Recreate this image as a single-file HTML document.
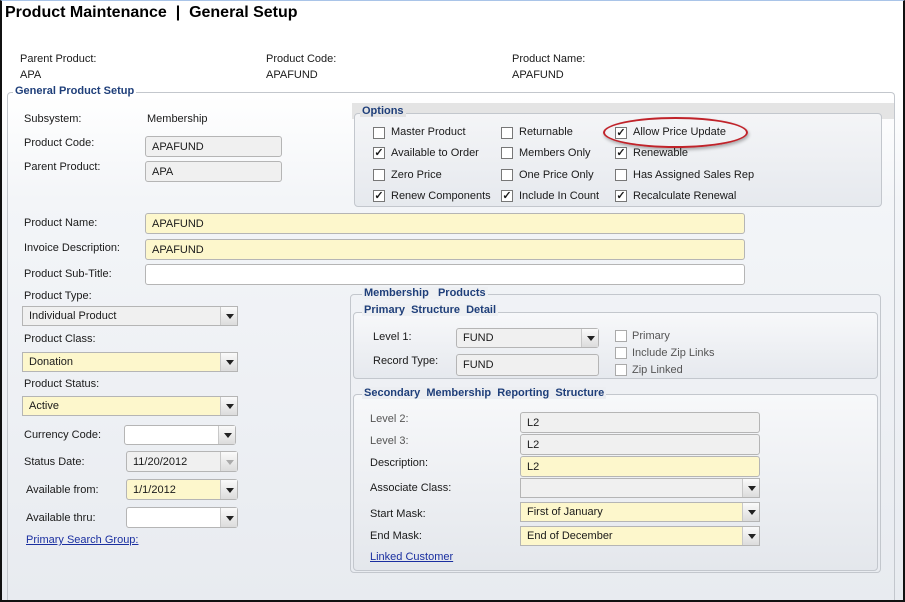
<!DOCTYPE html>
<html><head><meta charset="utf-8"><style>
*{box-sizing:border-box;margin:0;padding:0}
body{width:905px;height:602px;overflow:hidden;font-family:"Liberation Sans",Arial,sans-serif;font-size:11px;color:#1a1a1a;position:relative;background:#fff}
#frame{position:absolute;left:0;top:0;width:905px;height:602px;background:linear-gradient(#fff 0,#fff 95px,#f3f5f8 200px,#e8ebf0 602px)}
#bord{position:absolute;left:0;top:0;width:905px;height:602px;border-left:2px solid #111;border-right:2px solid #111;border-bottom:2px solid #111;border-top:1px solid #a9c4e8;z-index:10}
.a{position:absolute;white-space:nowrap}
.t{position:absolute;font-size:16px;font-weight:bold;left:5px;top:4px;color:#000}
.lg{position:absolute;font-weight:bold;color:#1f3f7a;background:transparent;padding:0 2px;white-space:nowrap}
.box{position:absolute;border:1px solid #c3c7cd;border-radius:4px}
.in{position:absolute;border:1px solid #b5b5b5;border-radius:3px;background:#f0f0f0;padding:0 0 0 6px;white-space:nowrap;display:flex;align-items:center}
.y{background:#fdf7cc}
.w{background:#fff}
.dd{position:absolute;right:0;top:0;bottom:0;width:17px;background:linear-gradient(#fafafa,#dcdcdc);border-left:1px solid #c8c8c8}
.dd:after{content:"";position:absolute;left:5px;top:50%;margin-top:-2px;border-left:4px solid transparent;border-right:4px solid transparent;border-top:5px solid #222}
.dis .dd:after{border-top-color:#aaa}
.cb{position:absolute;width:12px;height:12px;border:1px solid #777;background:#fff;font-size:11px;line-height:10px;text-align:center;font-weight:bold}
.cbd{border-color:#aaa}
.lk{position:absolute;color:#1a2fa0;text-decoration:underline;white-space:nowrap}
.g{color:#555}
</style></head><body><div id="frame">
<div class="t">Product Maintenance &nbsp;|&nbsp; General Setup</div>
<div class="a" style="left:20px;top:53px">Parent Product:</div>
<div class="a" style="left:20px;top:69px">APA</div>
<div class="a" style="left:266px;top:53px">Product Code:</div>
<div class="a" style="left:266px;top:69px">APAFUND</div>
<div class="a" style="left:512px;top:53px">Product Name:</div>
<div class="a" style="left:512px;top:69px">APAFUND</div>

<div class="box" style="left:7px;top:92px;width:888px;height:510px;border-bottom:none;border-radius:4px 4px 0 0"></div>
<div class="lg" style="left:13px;top:85px;background:#fff">General Product Setup</div>

<div class="a" style="left:24px;top:113px">Subsystem:</div>
<div class="a" style="left:147px;top:113px">Membership</div>
<div class="a" style="left:24px;top:137px">Product Code:</div>
<div class="in" style="left:145px;top:136px;width:137px;height:21px">APAFUND</div>
<div class="a" style="left:24px;top:161px">Parent Product:</div>
<div class="in" style="left:145px;top:161px;width:137px;height:21px">APA</div>

<div style="position:absolute;left:352px;top:103px;width:542px;height:16px;background:#e4e4e4"></div>
<div class="box" style="left:354px;top:113px;width:528px;height:94px;background:linear-gradient(#f4f5f7,#e6e9ee)"></div>
<div class="lg" style="left:360px;top:105px;background:#e4e4e4">Options</div>
<div class="cb" style="left:373px;top:127px"></div><div class="a" style="left:391px;top:126px">Master Product</div>
<div class="cb" style="left:373px;top:147px">✓</div><div class="a" style="left:391px;top:147px">Available to Order</div>
<div class="cb" style="left:373px;top:169px"></div><div class="a" style="left:391px;top:169px">Zero Price</div>
<div class="cb" style="left:373px;top:190px">✓</div><div class="a" style="left:391px;top:190px">Renew Components</div>
<div class="cb" style="left:501px;top:127px"></div><div class="a" style="left:519px;top:126px">Returnable</div>
<div class="cb" style="left:501px;top:147px"></div><div class="a" style="left:519px;top:147px">Members Only</div>
<div class="cb" style="left:501px;top:169px"></div><div class="a" style="left:519px;top:169px">One Price Only</div>
<div class="cb" style="left:501px;top:190px">✓</div><div class="a" style="left:519px;top:190px">Include In Count</div>
<div class="cb" style="left:615px;top:127px">✓</div><div class="a" style="left:633px;top:126px">Allow Price Update</div>
<div class="cb" style="left:615px;top:147px">✓</div><div class="a" style="left:633px;top:147px">Renewable</div>
<div class="cb" style="left:615px;top:169px"></div><div class="a" style="left:633px;top:169px">Has Assigned Sales Rep</div>
<div class="cb" style="left:615px;top:190px">✓</div><div class="a" style="left:633px;top:190px">Recalculate Renewal</div>
<div style="position:absolute;left:603px;top:117px;width:145px;height:31px;border:2px solid #c0232a;border-radius:50%;box-shadow:1px 2px 3px rgba(0,0,0,.3)"></div>

<div class="a" style="left:24px;top:217px">Product Name:</div>
<div class="in y" style="left:145px;top:213px;width:600px;height:21px">APAFUND</div>
<div class="a" style="left:24px;top:242px">Invoice Description:</div>
<div class="in y" style="left:145px;top:239px;width:600px;height:21px">APAFUND</div>
<div class="a" style="left:24px;top:268px">Product Sub-Title:</div>
<div class="in w" style="left:145px;top:264px;width:600px;height:21px"></div>

<div class="a" style="left:24px;top:290px">Product Type:</div>
<div class="in" style="left:22px;top:306px;width:216px;height:20px;border-radius:0">Individual Product<div class="dd"></div></div>
<div class="a" style="left:24px;top:333px">Product Class:</div>
<div class="in y" style="left:22px;top:352px;width:216px;height:20px;border-radius:0">Donation<div class="dd"></div></div>
<div class="a" style="left:24px;top:378px">Product Status:</div>
<div class="in y" style="left:22px;top:396px;width:216px;height:20px;border-radius:0">Active<div class="dd"></div></div>
<div class="a" style="left:24px;top:429px">Currency Code:</div>
<div class="in w" style="left:124px;top:425px;width:112px;height:20px">&nbsp;<div class="dd"></div></div>
<div class="a" style="left:24px;top:456px">Status Date:</div>
<div class="in dis" style="left:126px;top:451px;width:112px;height:21px">11/20/2012<div class="dd"></div></div>
<div class="a" style="left:26px;top:484px">Available from:</div>
<div class="in y" style="left:126px;top:479px;width:112px;height:21px">1/1/2012<div class="dd"></div></div>
<div class="a" style="left:26px;top:512px">Available thru:</div>
<div class="in w" style="left:126px;top:507px;width:112px;height:21px">&nbsp;<div class="dd"></div></div>
<div class="lk" style="left:26px;top:534px">Primary Search Group:</div>

<div class="box" style="left:350px;top:294px;width:531px;height:279px"></div>
<div class="lg" style="left:362px;top:287px;background:#eef0f3">Membership &nbsp; Products</div>
<div class="box" style="left:353px;top:312px;width:525px;height:67px;background:linear-gradient(#f7f8fa,#e6e9ee)"></div>
<div class="lg" style="left:362px;top:304px;background:#eef0f3">Primary &nbsp;Structure &nbsp;Detail</div>
<div class="a" style="left:373px;top:331px">Level 1:</div>
<div class="in" style="left:456px;top:328px;width:143px;height:20px">FUND<div class="dd"></div></div>
<div class="a" style="left:373px;top:355px">Record Type:</div>
<div class="in" style="left:456px;top:354px;width:143px;height:22px">FUND</div>
<div class="cb cbd" style="left:615px;top:330px"></div><div class="a g" style="left:632px;top:330px">Primary</div>
<div class="cb cbd" style="left:615px;top:347px"></div><div class="a g" style="left:632px;top:347px">Include Zip Links</div>
<div class="cb cbd" style="left:615px;top:364px"></div><div class="a g" style="left:632px;top:364px">Zip Linked</div>

<div class="box" style="left:353px;top:394px;width:525px;height:177px;background:linear-gradient(#f7f8fa,#e4e7ec)"></div>
<div class="lg" style="left:362px;top:387px;background:#eceef2">Secondary &nbsp;Membership &nbsp;Reporting &nbsp;Structure</div>
<div class="a g" style="left:370px;top:413px">Level 2:</div>
<div class="in" style="left:520px;top:412px;width:240px;height:21px">L2</div>
<div class="a g" style="left:370px;top:435px">Level 3:</div>
<div class="in" style="left:520px;top:434px;width:240px;height:21px">L2</div>
<div class="a" style="left:370px;top:457px">Description:</div>
<div class="in y" style="left:520px;top:456px;width:240px;height:21px">L2</div>
<div class="a" style="left:370px;top:482px">Associate Class:</div>
<div class="in" style="left:520px;top:478px;width:240px;height:20px;border-radius:0">&nbsp;<div class="dd"></div></div>
<div class="a" style="left:370px;top:508px">Start Mask:</div>
<div class="in y" style="left:520px;top:502px;width:240px;height:20px;border-radius:0">First of January<div class="dd"></div></div>
<div class="a" style="left:370px;top:530px">End Mask:</div>
<div class="in y" style="left:520px;top:526px;width:240px;height:20px;border-radius:0">End of December<div class="dd"></div></div>
<div class="lk" style="left:370px;top:551px">Linked Customer</div>
</div><div id="bord"></div></body></html>
